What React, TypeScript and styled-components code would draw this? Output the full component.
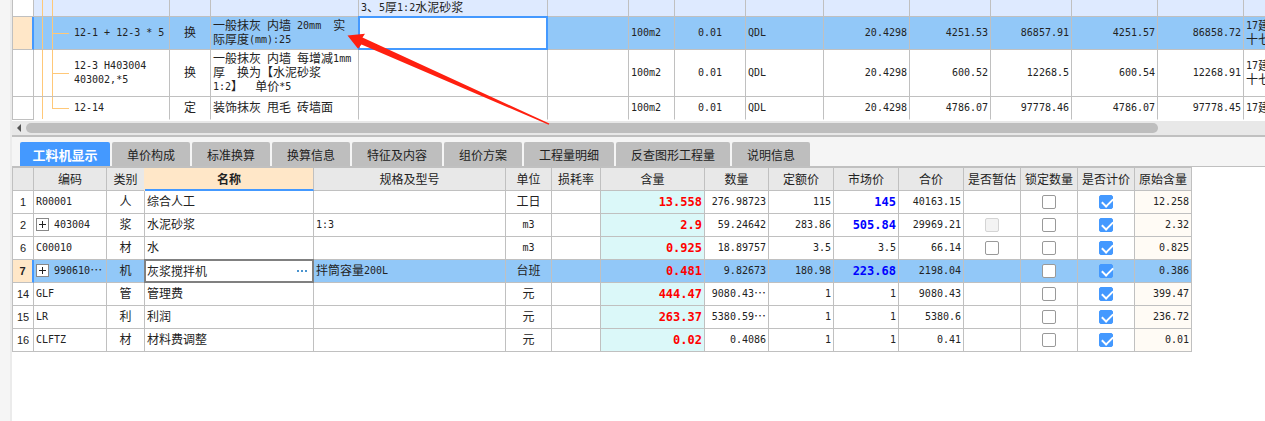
import React from "react";
import styled, { createGlobalStyle, css } from "styled-components";

const LINE = "#c0c0c0";
const BLUE = "#4499ff";
const SELECTED = "#92c8f8";
const PEACH = "#ffe7c8";
const TREE = "#ffc878";
const CJK = `"Noto Sans CJK SC", sans-serif`;
const MONO = `"DejaVu Sans Mono", "Noto Sans CJK SC", monospace`;

const GlobalStyle = createGlobalStyle`
  * { box-sizing: border-box; }
  body { margin: 0; background: #fff; color: #222; font: 12px/14px ${CJK}; }
  button, input { font: inherit; color: inherit; margin: 0; }
`;

const Shell = styled.div`
  display: flex;
  min-height: 100vh;
`;

const SideStrip = styled.div`
  flex: 0 0 12px;
  background: #f5f5f5;
  border-right: 2px solid #ebebeb;
`;

const Main = styled.main`
  position: relative;
  flex: 1;
  min-width: 0;
  overflow: hidden;
`;

const Latin = styled.span<{ $strong?: boolean }>`
  font-family: ${MONO};
  font-size: ${(p) => (p.$strong ? 12 : 10)}px;
  font-weight: ${(p) => (p.$strong ? 700 : 400)};
  line-height: 1;
  vertical-align: ${(p) => (p.$strong ? "baseline" : "1px")};
`;

const Grid = styled.table`
  table-layout: fixed;
  border-collapse: separate;
  border-spacing: 0;
  width: 0;
`;

const DetailGrid = styled(Grid)`
  border-top: 1px solid ${LINE};
`;

type Align = "left" | "center" | "right";

const cellBase = css`
  padding: 0 2px;
  border-right: 1px solid ${LINE};
  border-bottom: 1px solid ${LINE};
  overflow: hidden;
  white-space: pre;
  vertical-align: middle;
  font-weight: 400;
`;

const Cell = styled.td<{ $align?: Align; $bg?: string; $color?: string }>`
  ${cellBase}
  padding-bottom: 2px;
  text-align: ${(p) => p.$align ?? "left"};
  background: ${(p) => p.$bg ?? "transparent"};
  color: ${(p) => p.$color ?? "inherit"};
`;

const CheckCell = styled(Cell)`
  padding: 0;
`;

const EditCell = styled(Cell)`
  position: relative;
  overflow: visible;
  padding: 0;
`;

const Gutter = styled.th<{ $active?: boolean }>`
  ${cellBase}
  padding: 0;
  border-left: 1px solid ${LINE};
  text-align: center;
  font-family: "Liberation Sans", sans-serif;
  font-size: 11px;
  background: #fff;
  ${(p) =>
    p.$active &&
    css`
      background: ${PEACH};
      border-right: 2px solid ${BLUE};
      font-weight: 700;
    `}
`;

const HeadCell = styled.th<{ $current?: boolean }>`
  ${cellBase}
  background: #e8e8e8;
  text-align: center;
  padding: 0;
  &:first-child { border-left: 1px solid ${LINE}; }
  ${(p) =>
    p.$current &&
    css`
      position: relative;
      background: ${PEACH};
      border-bottom: 2px solid ${BLUE};
      box-shadow: -1px 0 0 ${PEACH};
      font-weight: 700;
    `}
`;

const Row = styled.tr<{ $h: number; $bg?: string }>`
  height: ${(p) => p.$h}px;
  background: ${(p) => p.$bg ?? "#fff"};
`;

const TreeCell = styled(Cell)<{ $last?: boolean; $branch?: boolean }>`
  padding-left: 40px;
  white-space: pre-line;
  background-image: linear-gradient(${TREE}, ${TREE}), linear-gradient(${TREE}, ${TREE}),
    linear-gradient(${TREE}, ${TREE});
  background-repeat: no-repeat;
  background-position: 8px 0, 18px 0, 18px 50%;
  background-size: 1px 100%, 1px ${(p) => (p.$last ? "50%" : "100%")},
    ${(p) => (p.$branch ? "17px 1px" : "0 0")};
`;

const TopPane = styled.section`
  overflow: hidden;
  padding-bottom: 1px;
  tr:last-child > td { border-bottom-color: transparent; }
`;

const ScrollTrack = styled.div`
  display: flex;
  align-items: center;
  height: 14px;
  padding: 0 107px 0 4px;
  background: #e8e8e8;
`;

const ScrollButton = styled.button`
  display: flex;
  width: 10px;
  height: 10px;
  padding: 0;
  border: 0;
  background: none;
`;

const Thumb = styled.div`
  flex: 1;
  height: 10px;
  border-radius: 5px;
  background: #bebebe;
`;

const TabBar = styled.nav`
  display: flex;
  gap: 2px;
  padding: 5px 8px 0;
  border-top: 2px solid ${LINE};
  border-bottom: 1px solid ${LINE};
  background: #f5f5f5;
`;

const Tab = styled.button<{ $active?: boolean }>`
  height: 24px;
  padding: 2px 15px 0;
  border: 0;
  border-radius: 2px 2px 0 0;
  background: #bebebe;
  white-space: nowrap;
  ${(p) =>
    p.$active &&
    css`
      padding: 2px 12px 0;
      min-width: 90px;
      background: ${BLUE};
      color: #fff;
      font-size: 13px;
      font-weight: 700;
    `}
`;

const Editor = styled.div<{ $frame: string }>`
  position: absolute;
  inset: -1px;
  display: flex;
  border: 2px solid ${(p) => p.$frame};
  background: #fff;
`;

const EditorInput = styled.input`
  flex: 1;
  min-width: 0;
  padding: 0 1px 1px;
  border: 0;
  outline: 0;
  background: transparent;
`;

const MoreButton = styled.button`
  display: flex;
  align-items: center;
  padding: 0 4px;
  border: 0;
  background: none;
`;

const CodeLine = styled.div`
  display: flex;
  align-items: center;
  gap: 5px;
`;

const Expander = styled.button`
  display: flex;
  flex: 0 0 13px;
  height: 13px;
  padding: 2px;
  border: 1px solid #888;
  background: #fff;
`;

const Check = styled.input`
  appearance: none;
  display: block;
  position: relative;
  width: 14px;
  height: 14px;
  margin: 0 auto;
  border: 1px solid #999;
  border-radius: 2px;
  background: #fff;
  &:disabled { border-color: #d4d4d4; background: #f3f3f3; }
  &:checked { border-color: ${BLUE}; background: ${BLUE}; }
  &:checked::after {
    content: "";
    position: absolute;
    left: 2px;
    top: 2px;
    width: 9px;
    height: 5px;
    border: solid #fff;
    border-width: 0 0 2px 2px;
    transform: rotate(-45deg);
  }
`;

const Arrow = styled.svg`
  position: absolute;
  left: 335px;
  top: 33px;
  pointer-events: none;
`;

/* Half-width runs are set in a smaller monospace so that two of them span one full-width glyph. */
function Mixed({ text, strong }: { text: string; strong?: boolean }) {
  return (
    <>
      {text.split(/([\x20-\x7e]+)/).map((part, i) =>
        i % 2 ? (
          <Latin key={i} $strong={strong}>{part}</Latin>
        ) : (
          part
        )
      )}
    </>
  );
}

const Cols = ({ widths }: { widths: number[] }) => (
  <colgroup>
    {widths.map((w, i) => (
      <col key={i} width={w} />
    ))}
  </colgroup>
);

const TOP_COLS = [22, 136, 41, 148, 189, 81, 46, 71, 78, 86, 81, 81, 86, 86, 120];

const items = [
  { h: 33, code: "12-1 + 12-3 * 5", kind: "换", name: "一般抹灰 内墙 20mm  实\n际厚度(mm):25", nums: ["20.4298", "4251.53", "86857.91", "4251.57", "86858.72"], book: "17建\n十七", selected: true },
  { h: 47, code: "12-3 H403004 403002,*5", kind: "换", name: "一般抹灰 内墙 每增减1mm\n厚  换为【水泥砂浆\n1:2】  单价*5", nums: ["20.4298", "600.52", "12268.5", "600.54", "12268.91"], book: "17建\n十七" },
  { h: 23, code: "12-14", kind: "定", name: "装饰抹灰 甩毛 砖墙面", nums: ["20.4298", "4786.07", "97778.46", "4786.07", "97778.45"], book: "17建" },
];

const TABS = ["工料机显示", "单价构成", "标准换算", "换算信息", "特征及内容", "组价方案", "工程量明细", "反查图形工程量", "说明信息"];

const DETAIL_COLS = [22, 73, 38, 169, 192, 46, 49, 104, 64, 65, 65, 65, 57, 57, 57, 57];
const HEADS = ["", "编码", "类别", "名称", "规格及型号", "单位", "损耗率", "含量", "数量", "定额价", "市场价", "合价", "是否暂估", "锁定数量", "是否计价", "原始含量"];

interface Resource {
  no: number; code: string; kind: string; name: string; spec?: string; unit: string;
  content: string; qty: string; base: string; market: string; total: string; orig: string;
  group?: boolean; marked?: boolean; estimate?: "off" | "disabled"; selected?: boolean;
}

const resources: Resource[] = [
  { no: 1, code: "R00001", kind: "人", name: "综合人工", unit: "工日", content: "13.558", qty: "276.98723", base: "115", market: "145", marked: true, total: "40163.15", orig: "12.258" },
  { no: 2, code: "403004", group: true, kind: "浆", name: "水泥砂浆", spec: "1:3", unit: "m3", content: "2.9", qty: "59.24642", base: "283.86", market: "505.84", marked: true, total: "29969.21", estimate: "disabled", orig: "2.32" },
  { no: 6, code: "C00010", kind: "材", name: "水", unit: "m3", content: "0.925", qty: "18.89757", base: "3.5", market: "3.5", total: "66.14", estimate: "off", orig: "0.825" },
  { no: 7, code: "990610…", group: true, kind: "机", name: "灰浆搅拌机", spec: "拌筒容量200L", unit: "台班", content: "0.481", qty: "9.82673", base: "180.98", market: "223.68", marked: true, total: "2198.04", orig: "0.386", selected: true },
  { no: 14, code: "GLF", kind: "管", name: "管理费", unit: "元", content: "444.47", qty: "9080.43…", base: "1", market: "1", total: "9080.43", orig: "399.47" },
  { no: 15, code: "LR", kind: "利", name: "利润", unit: "元", content: "263.37", qty: "5380.59…", base: "1", market: "1", total: "5380.6", orig: "236.72" },
  { no: 16, code: "CLFTZ", kind: "材", name: "材料费调整", unit: "元", content: "0.02", qty: "0.4086", base: "1", market: "1", total: "0.41", orig: "0.01" },
];

function ItemTable() {
  return (
    <TopPane>
      <Grid>
        <Cols widths={TOP_COLS} />
        <tbody>
          <Row $h={17} $bg="#deeaff">
            <Gutter />
            <TreeCell />
            <Cell />
            <Cell />
            <Cell><Mixed text="3、5厚1:2水泥砂浆" /></Cell>
            {TOP_COLS.slice(5).map((_, i) => <Cell key={i} />)}
          </Row>
          {items.map((r) => (
            <Row key={r.code} $h={r.h} $bg={r.selected ? SELECTED : undefined}>
              <Gutter $active={r.selected} />
              <TreeCell $branch $last={r.code === "12-14"}><Mixed text={r.code} /></TreeCell>
              <Cell $align="center">{r.kind}</Cell>
              <Cell><Mixed text={r.name} /></Cell>
              {r.selected ? (
                <EditCell>
                  <Editor $frame={BLUE}><EditorInput aria-label="项目特征" /></Editor>
                </EditCell>
              ) : (
                <Cell />
              )}
              <Cell />
              <Cell><Mixed text="100m2" /></Cell>
              <Cell $align="center"><Mixed text="0.01" /></Cell>
              <Cell><Mixed text="QDL" /></Cell>
              {r.nums.map((n, i) => (
                <Cell key={i} $align="right"><Mixed text={n} /></Cell>
              ))}
              <Cell><Mixed text={r.book} /></Cell>
            </Row>
          ))}
        </tbody>
      </Grid>
    </TopPane>
  );
}

function ResourceRow({ r }: { r: Resource }) {
  return (
    <Row $h={23} $bg={r.selected ? SELECTED : undefined}>
      <Gutter scope="row" $active={r.selected}>{r.no}</Gutter>
      <Cell>
        <CodeLine>
          {r.group && (
            <Expander aria-label="展开">
              <svg width="7" height="7" viewBox="0 0 7 7"><path d="M0 3h7v1H0zM3 0h1v7H3z" fill="#222" /></svg>
            </Expander>
          )}
          <span><Mixed text={r.code} /></span>
        </CodeLine>
      </Cell>
      <Cell $align="center">{r.kind}</Cell>
      {r.selected ? (
        <EditCell>
          <Editor $frame="#808080">
            <EditorInput aria-label="名称" defaultValue={r.name} />
            <MoreButton aria-label="更多">
              <svg width="11" height="2" viewBox="0 0 11 2"><path d="M0 0h2v2H0zM4 0h2v2H4zM8 0h2v2H8z" fill="#4a94cf" /></svg>
            </MoreButton>
          </Editor>
        </EditCell>
      ) : (
        <Cell>{r.name}</Cell>
      )}
      <Cell><Mixed text={r.spec ?? ""} /></Cell>
      <Cell $align="center"><Mixed text={r.unit} /></Cell>
      <Cell />
      <Cell $align="right" $color="#ff0000" $bg={r.selected ? undefined : "#dbf8f9"}><Mixed strong text={r.content} /></Cell>
      <Cell $align="right"><Mixed text={r.qty} /></Cell>
      <Cell $align="right"><Mixed text={r.base} /></Cell>
      <Cell $align="right" $color={r.marked ? "#0000ff" : undefined}><Mixed strong={r.marked} text={r.market} /></Cell>
      <Cell $align="right"><Mixed text={r.total} /></Cell>
      <CheckCell>{r.estimate && <Check type="checkbox" aria-label="是否暂估" disabled={r.estimate === "disabled"} />}</CheckCell>
      <CheckCell><Check type="checkbox" aria-label="锁定数量" /></CheckCell>
      <CheckCell><Check type="checkbox" aria-label="是否计价" defaultChecked /></CheckCell>
      <Cell $align="right" $bg={r.selected ? undefined : "#fffbf5"}><Mixed text={r.orig} /></Cell>
    </Row>
  );
}

export default function App() {
  return (
    <Shell>
      <GlobalStyle />
      <SideStrip />
      <Main>
        <ItemTable />
        <ScrollTrack>
          <ScrollButton aria-label="向左滚动">
            <svg width="6" height="10" viewBox="0 0 6 10"><path d="M5 1v8L1 5z" fill="#555" /></svg>
          </ScrollButton>
          <Thumb />
        </ScrollTrack>
        <TabBar>
          {TABS.map((t, i) => (
            <Tab key={t} $active={i === 0}>{t}</Tab>
          ))}
        </TabBar>
        <DetailGrid>
          <Cols widths={DETAIL_COLS} />
          <thead>
            <Row $h={23}>
              {HEADS.map((h, i) => (
                <HeadCell key={i} scope="col" $current={h === "名称"}>{h}</HeadCell>
              ))}
            </Row>
          </thead>
          <tbody>
            {resources.map((r) => (
              <ResourceRow key={r.no} r={r} />
            ))}
          </tbody>
        </DetailGrid>
        <Arrow width="203" height="93" viewBox="0 0 203 93">
          <path d="M0.5 2.5L18 0.7L15.5 4.5L202.3 90.6L201.7 91.8L14.5 11.5L11 15.7Z" fill="#ff2010" />
        </Arrow>
      </Main>
    </Shell>
  );
}
